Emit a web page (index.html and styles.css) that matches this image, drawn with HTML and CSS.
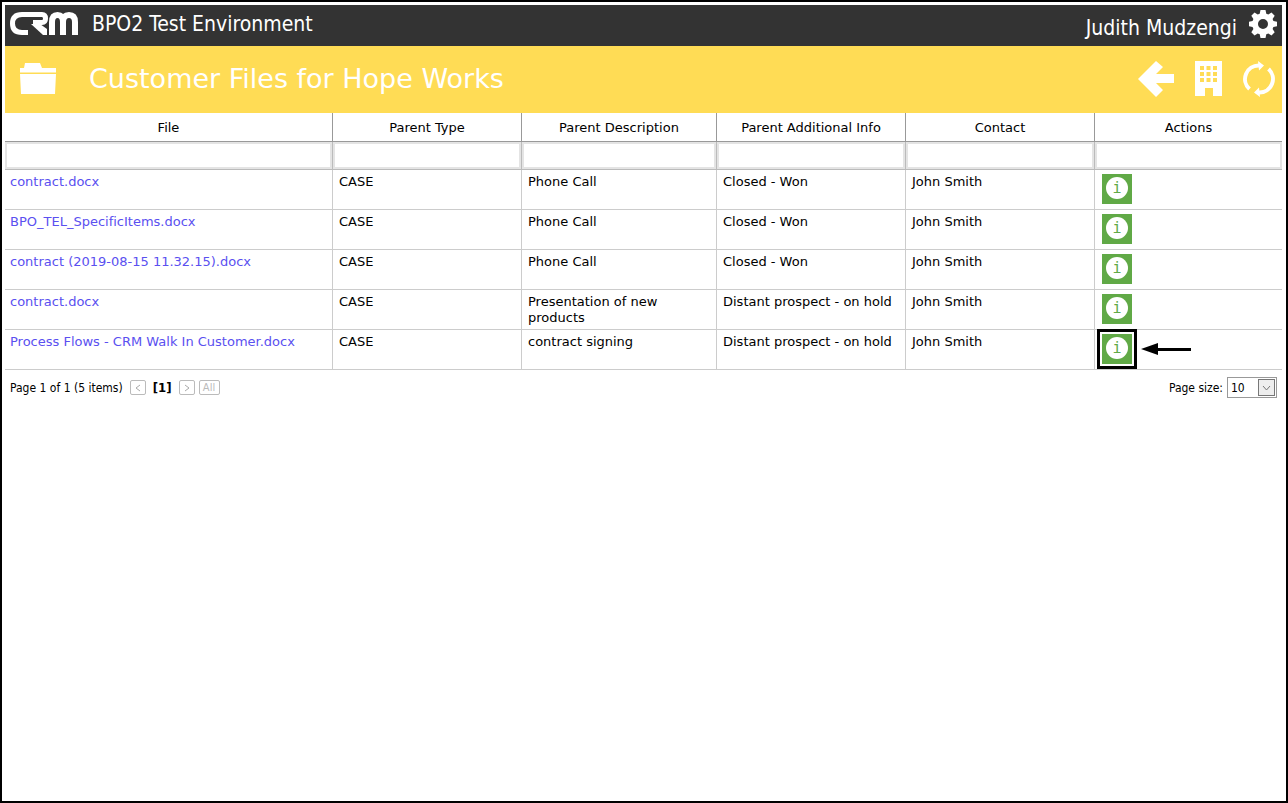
FILE: index.html
```html
<!DOCTYPE html>
<html lang="en">
<head>
  <meta charset="UTF-8">
  <title>Customer Files</title>
  <link rel="stylesheet" href="styles.css">
</head>
<body>
  <header class="topbar">
    <svg class="logo" viewBox="0 0 68 24" role="img" aria-label="CRM">
      <path d="M22 2.500H12Q2.500 2.500 2.500 11.500T12 20.500H18"/>
      <path d="M20 2.500H32Q35.500 2.500 35.500 6.500T32 10.500H23"/>
      <path class="leg" d="M21 12h9l7 5v6h-4z"/>
      <path class="thick" d="M42 23V10Q42 3 47.500 3T53 10V23M53 10Q53 3 59 3T65 10V23"/>
    </svg>
    <span class="site-name">BPO2 Test Environment</span>
    <span class="user-name">Judith Mudzengi</span>
    <button class="icon-btn" aria-label="Settings">
      <svg width="28" height="28" viewBox="0 0 28 28">
        <path fill-rule="evenodd" d="M11.500 0h5l.8 3.800 2 .8L22.500 2.500l3.200 3.200-2.100 3.200.8 2 3.600.8v4.600l-3.600.8-.8 2 2.100 3.200-3.200 3.200-3.200-2.100-2 .8-.8 3.800h-5l-.8-3.800-2-.8-3.200 2.100-3.200-3.200 2.100-3.200-.8-2L0 16.300v-4.600l3.600-.8.8-2L2.300 5.700l3.200-3.200 3.200 2.100 2-.8zM14 9a5 5 0 1 0 0 10a5 5 0 1 0 0-10z"/>
      </svg>
    </button>
  </header>

  <div class="titlebar">
    <svg class="folder" width="36" height="31" viewBox="0 0 36 31">
      <path d="M0 5h4L5 0h15l2 5h14v4.500H0zM0 11h36l-1 20H1z"/>
    </svg>
    <h1>Customer Files for Hope Works</h1>
    <div class="title-actions">
      <button class="icon-btn" aria-label="Back">
        <svg width="36" height="36" viewBox="0 0 36 36">
          <path d="M0 18L18 0l7 6-7 7h18v9H18l7 7-7 7z"/>
        </svg>
      </button>
      <button class="icon-btn" aria-label="Company">
        <svg width="27" height="35" viewBox="0 0 27 35">
          <path fill-rule="evenodd" d="M0 0h27v35h-9v-8h-8v8H0zM5 5v4h4V5zM11.500 5v4h4V5zM18 5v4h4V5zM5 11v4h4v-4zM11.500 11v4h4v-4zM18 11v4h4v-4zM5 17v4h4v-4zM11.500 17v4h4v-4zM18 17v4h4v-4z"/>
        </svg>
      </button>
      <button class="icon-btn" aria-label="Refresh">
        <svg width="32" height="36" viewBox="0 0 32 36">
          <path class="ring" d="M6.500 28A13.500 13.500 0 0 1 16 4.500M25.500 8A13.500 13.500 0 0 1 16 31.500"/>
          <path d="M15 0l6 4.500-5 5zM17 36l-6-4.500 5-5z"/>
        </svg>
      </button>
    </div>
  </div>

  <table class="grid">
    <colgroup>
      <col>
      <col class="col-md">
      <col class="col-lg">
      <col class="col-md">
      <col class="col-md">
      <col class="col-sm">
    </colgroup>
    <thead>
      <tr>
        <th>File</th>
        <th>Parent Type</th>
        <th>Parent Description</th>
        <th>Parent Additional Info</th>
        <th>Contact</th>
        <th>Actions</th>
      </tr>
      <tr class="filters">
        <td><input type="text" aria-label="Filter by file"></td>
        <td><input type="text" aria-label="Filter by parent type"></td>
        <td><input type="text" aria-label="Filter by parent description"></td>
        <td><input type="text" aria-label="Filter by parent additional info"></td>
        <td><input type="text" aria-label="Filter by contact"></td>
        <td><input type="text" aria-label="Filter by actions"></td>
      </tr>
    </thead>
    <tbody>
      <tr>
        <td><a href="#">contract.docx</a></td>
        <td>CASE</td>
        <td>Phone Call</td>
        <td>Closed - Won</td>
        <td>John Smith</td>
        <td><button class="info-btn" aria-label="Info"><span>i</span></button></td>
      </tr>
      <tr>
        <td><a href="#">BPO_TEL_SpecificItems.docx</a></td>
        <td>CASE</td>
        <td>Phone Call</td>
        <td>Closed - Won</td>
        <td>John Smith</td>
        <td><button class="info-btn" aria-label="Info"><span>i</span></button></td>
      </tr>
      <tr>
        <td><a href="#">contract (2019-08-15 11.32.15).docx</a></td>
        <td>CASE</td>
        <td>Phone Call</td>
        <td>Closed - Won</td>
        <td>John Smith</td>
        <td><button class="info-btn" aria-label="Info"><span>i</span></button></td>
      </tr>
      <tr>
        <td><a href="#">contract.docx</a></td>
        <td>CASE</td>
        <td>Presentation of new products</td>
        <td>Distant prospect - on hold</td>
        <td>John Smith</td>
        <td><button class="info-btn" aria-label="Info"><span>i</span></button></td>
      </tr>
      <tr>
        <td><a href="#">Process Flows - CRM Walk In Customer.docx</a></td>
        <td>CASE</td>
        <td>contract signing</td>
        <td>Distant prospect - on hold</td>
        <td>John Smith</td>
        <td>
          <div class="marked">
            <button class="info-btn" aria-label="Info"><span>i</span></button>
            <svg class="pointer" width="50" height="12" viewBox="0 0 50 12">
              <path d="M0 6L17 0v5h33v3H17v4z"/>
            </svg>
          </div>
        </td>
      </tr>
    </tbody>
  </table>

  <footer class="pager">
    <span class="summary">Page 1 of 1 (5 items)</span>
    <button class="page-btn" aria-label="Previous" disabled>
      <svg width="6" height="8" viewBox="0 0 6 8"><path d="M5 1L1 4l4 3"/></svg>
    </button>
    <b class="current">[1]</b>
    <button class="page-btn" aria-label="Next" disabled>
      <svg width="6" height="8" viewBox="0 0 6 8"><path d="M1 1l4 3-4 3"/></svg>
    </button>
    <button class="page-btn all" disabled>All</button>
    <label class="size-label" for="pageSize">Page size:</label>
    <div class="size-box">
      <select id="pageSize">
        <option>10</option>
        <option>20</option>
        <option>50</option>
      </select>
      <svg class="drop" width="17" height="17" viewBox="0 0 17 17">
        <rect x=".5" y=".5" width="16" height="16"/>
        <path d="M5 7l3.500 4L12 7"/>
      </svg>
    </div>
  </footer>
</body>
</html>
```

FILE: styles.css
```css
*,
*::before {
  box-sizing: border-box;
}

body {
  margin: 0;
  min-height: 100vh;
  padding: 3px 4px 3px 3px;
  border: 2px solid #000;
  background-color: #fff;
  color: #000;
  font-family: Verdana, "DejaVu Sans", sans-serif;
  font-size: 13px;
  font-variant-ligatures: none;
}

button {
  padding: 0;
  border: none;
  background: none;
  cursor: pointer;
}

.topbar,
.titlebar,
.title-actions,
.pager {
  display: flex;
  align-items: center;
}

.topbar {
  height: 41px;
  padding: 0 5px 4px;
  background-color: #333;
  color: #fff;
  font-family: Tahoma, "DejaVu Sans Condensed", sans-serif;
  font-size: 21px;
}

.logo {
  width: 68px;
  height: 24px;
  margin-right: 14px;
  fill: none;
  stroke: #fff;
  stroke-width: 5;
}

.logo .thick {
  stroke-width: 6;
}

.logo .leg {
  fill: #fff;
  stroke: none;
}

.user-name {
  margin-left: auto;
  margin-right: 12px;
  padding-top: 8px;
}

.icon-btn svg {
  display: block;
  fill: #fff;
}

.icon-btn .ring {
  fill: none;
  stroke: #fff;
  stroke-width: 4;
}

.titlebar {
  height: 67px;
  padding: 0 7px 2px 15px;
  background-color: #ffdc55;
  color: #fff;
}

.folder {
  margin-right: 33px;
  fill: #fff;
}

h1 {
  margin: 0;
  font-size: 27px;
  font-weight: normal;
}

.title-actions {
  margin-left: auto;
  gap: 21px;
}

.grid {
  width: 100%;
  table-layout: fixed;
  border-collapse: separate;
  border-spacing: 0;
}

.col-sm {
  width: 187px;
}

.col-md {
  width: 189px;
}

.col-lg {
  width: 195px;
}

.grid th {
  height: 29px;
  padding: 0;
  border-right: 1px solid #999;
  border-bottom: 1px solid #999;
  font-weight: normal;
}

.grid td {
  height: 40px;
  padding: 4px 6px 3px;
  border-right: 1px solid #ccc;
  border-bottom: 1px solid #ccc;
  line-height: 16px;
  vertical-align: top;
}

.grid td:first-child {
  padding-left: 5px;
}

.grid .filters td {
  height: 28px;
  padding: 0;
  border-color: #bbb;
}

.grid th:last-child,
.grid td:last-child {
  border-right: none;
}

.filters input {
  display: block;
  width: 100%;
  height: 27px;
  border: 2px solid #e4e4e4;
  background-color: #fff;
}

.grid a {
  color: #5a50f0;
  text-decoration: none;
}

.info-btn {
  display: block;
  width: 30px;
  height: 30px;
  margin-left: 1px;
  padding: 3px 4px 5px;
  background-color: #60a946;
}

.info-btn span {
  display: block;
  border-radius: 50%;
  background-color: #fff;
  color: #60a946;
  font-family: "DejaVu Sans Mono", monospace;
  font-size: 15px;
  line-height: 22px;
}

.marked {
  position: relative;
  width: 31px;
}

/* frame and arrow around the action to click */
.marked::before {
  content: "";
  position: absolute;
  top: -5px;
  left: -4px;
  width: 40px;
  height: 40px;
  border: 3px solid #000;
}

.pointer {
  position: absolute;
  top: 9px;
  left: 40px;
}

.pager {
  height: 35px;
  padding: 0 5px;
  font-family: Tahoma, "DejaVu Sans Condensed", sans-serif;
  font-size: 12px;
}

.page-btn {
  display: flex;
  align-items: center;
  justify-content: center;
  width: 16px;
  height: 15px;
  border: 1px solid #bbb;
  border-radius: 2px;
  color: #bbb;
  font-family: inherit;
  font-size: 11px;
}

.page-btn svg {
  fill: none;
  stroke: #aaa;
}

.page-btn.all {
  width: 21px;
  margin-left: 4px;
}

.summary {
  margin-right: 7px;
}

.current {
  margin: 0 7px;
  font-size: 13px;
}

.size-label {
  margin-left: auto;
  margin-right: 4px;
}

.size-box {
  position: relative;
}

.size-box select {
  display: block;
  width: 50px;
  height: 21px;
  padding: 0 3px;
  border: 1px solid #999;
  border-radius: 0;
  background-color: #fff;
  color: #000;
  font-family: inherit;
  font-size: 12px;
  appearance: none;
}

.drop {
  position: absolute;
  top: 2px;
  right: 2px;
  fill: #eee;
  stroke: #777;
  pointer-events: none;
}
```
